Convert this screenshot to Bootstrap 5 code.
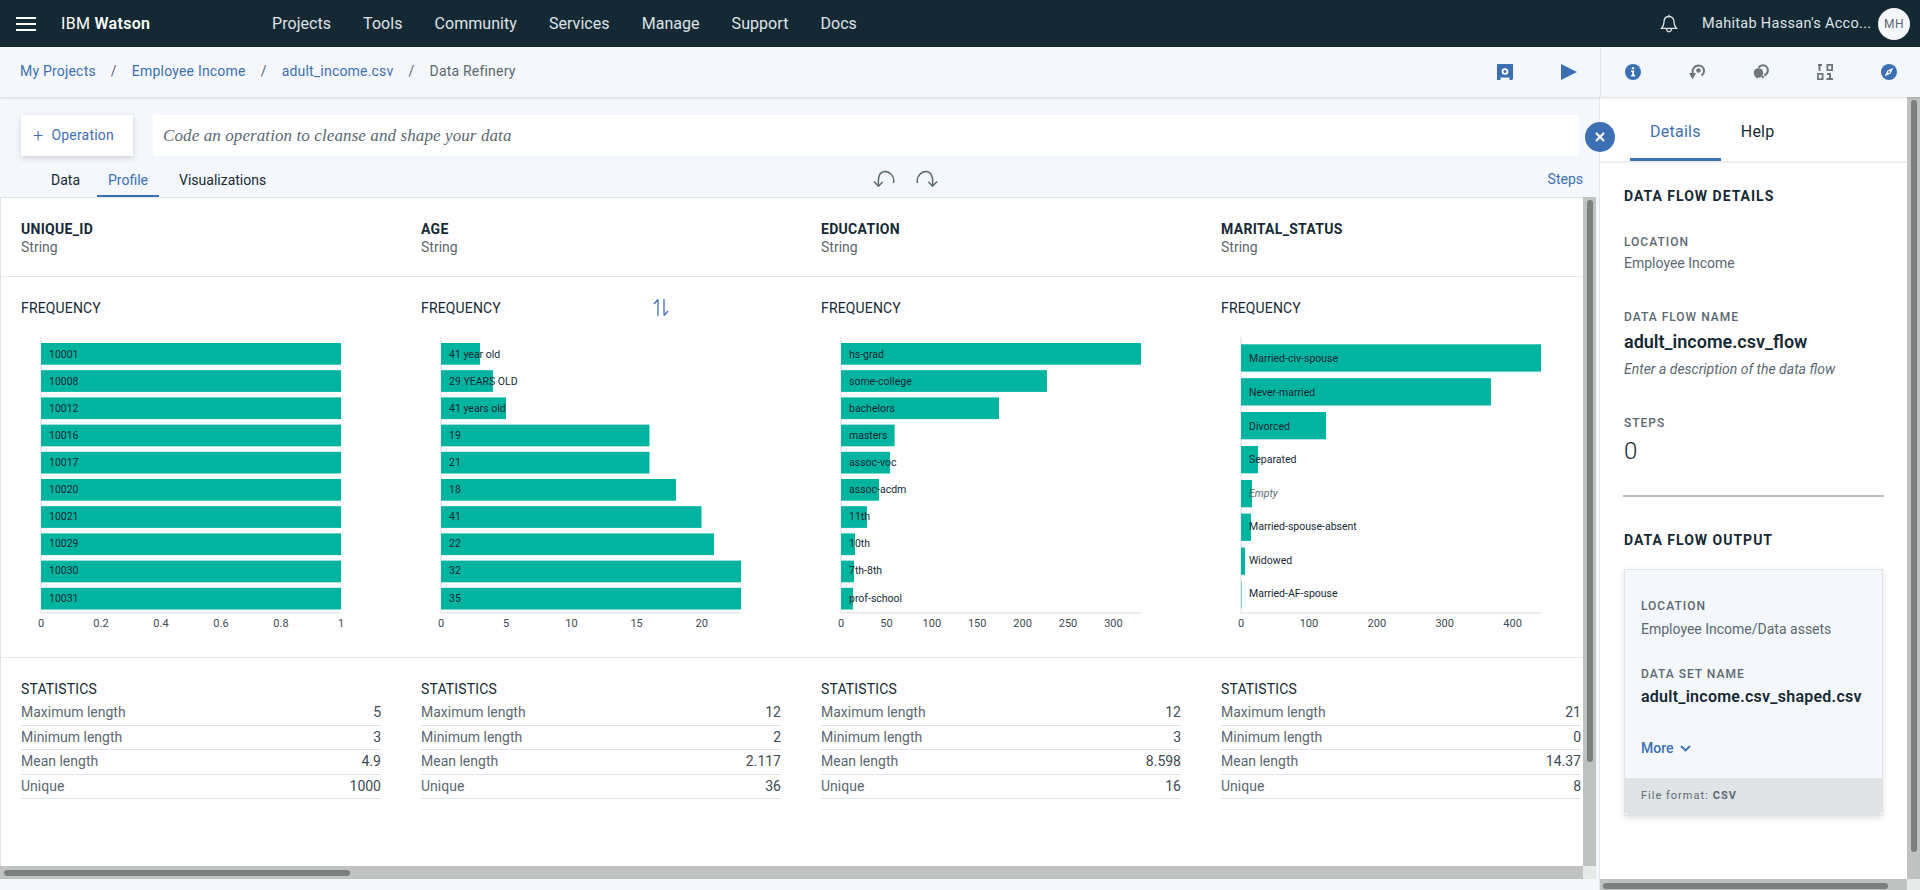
<!DOCTYPE html>
<html lang="en">
<head>
<meta charset="utf-8">
<title>Data Refinery</title>
<link href="https://cdn.jsdelivr.net/npm/bootstrap@5.3.0/dist/css/bootstrap.min.css" rel="stylesheet">
<style>
html,body{height:890px;overflow:hidden}
body{font-family:Roboto,"Liberation Sans",sans-serif;font-size:14px;color:#152935;background:#f4f7fb}
.app-frame{width:1920px;height:890px}
.top-bar{height:47px;background:#152935;padding:0;flex-wrap:nowrap}
.burger{width:20px;height:14px;margin-left:16px;border-top:2px solid #fff;border-bottom:2px solid #fff;position:relative}
.burger::after{content:"";position:absolute;left:0;right:0;top:4px;height:2px;background:#fff}
.brand-name{margin-left:25px;width:211px;color:#fff;font-size:16px;letter-spacing:.3px}
.brand-name b{font-weight:600}
.main-links{gap:32px}
.main-links a{color:#dfe3e6;font-size:16px;text-decoration:none;padding:0;letter-spacing:.05px}
.acct-name{color:#dfe3e6;font-size:14.5px;letter-spacing:.3px;margin:0 21px 0 24px;width:155px;white-space:nowrap}
.avatar-dot{width:32px;height:32px;border-radius:50%;background:#f4f7fb;color:#5a6872;font-size:12px;letter-spacing:.5px;margin-right:10px}
.sub-head{height:50px;background:#f4f7fb;box-shadow:0 1px 2px rgba(0,0,0,.14);position:relative;z-index:2}
.crumbs{width:1600px;height:50px;padding-left:20px}
.crumbs .breadcrumb{--bs-breadcrumb-margin-bottom:0;--bs-breadcrumb-divider-color:#5a6872;--bs-breadcrumb-item-active-color:#5a6872;--bs-breadcrumb-item-padding-x:15px;font-size:14px;letter-spacing:.2px;margin-top:-1px}
.crumbs a{color:#3d70b2;text-decoration:none}
.tool-icons{padding-right:23px;gap:48px}
.side-icons{width:320px;height:50px;border-left:1px solid #dfe3e6;padding-left:24px;gap:48px}
.work-area{width:1600px;height:793px}
.op-row{margin-top:18px;height:41px}
.op-btn{width:112px;height:41px;margin-left:21px;background:#fff;color:#3d70b2;font-size:14px;letter-spacing:.2px;box-shadow:0 2px 6px rgba(0,0,0,.16);border:0;border-radius:0;padding:0 0 0 12px;gap:8px;text-align:left}
.op-btn span{font-size:18px;line-height:1;font-weight:300}
.op-input{width:1426px;margin-left:20px;height:41px;background:#fff;font-family:"Liberation Serif",serif;font-style:italic;font-size:17px;letter-spacing:.1px;color:#5a6872;padding-left:10px}
.tab-row{height:41px;padding-right:17px}
.prof-tabs{margin-left:33px;width:840px}
.prof-tabs a{color:#152935;text-decoration:none;padding:0 18px;height:41px;line-height:48px;font-size:14px;border-bottom:2px solid transparent}
.prof-tabs a.on{color:#3d70b2;border-bottom-color:#3d70b2;padding:0;width:62px;text-align:center;margin:0 2px 0 -1px}
.hist-icons{gap:21px}
.steps-link{margin-left:auto;color:#3d70b2;text-decoration:none;padding-top:6px}
.sheet-wrap{width:1596px;height:682px;display:grid;grid-template-columns:1583px 13px;grid-template-rows:669px 13px}
.sheet{background:#fff;border-left:1px solid #dfe3e6;border-top:1px solid #dfe3e6;overflow:hidden}
.sec-grid{display:grid;grid-template-columns:repeat(4,400px);padding-left:20px}
.sec-head{height:79px;border-bottom:1px solid #e4e7ea;padding-top:22px}
.sec-freq{height:381px;border-bottom:1px solid #e4e7ea;padding-top:21px}
.col-name{font-weight:700;font-size:14px;line-height:18px;letter-spacing:.3px}
.col-type{color:#5a6872;line-height:18px}
.sub-title{line-height:20px;color:#152935;position:relative;letter-spacing:.15px}
.swap-ico{position:absolute;left:232px;top:0}
.freq-svg{display:block;margin-top:12px}
.freq-svg text{font-family:Roboto,"Liberation Sans",sans-serif;font-size:10.500px;fill:#152935}
.freq-svg .tick{fill:#3d4a52;text-anchor:middle;font-size:11px}
.freq-svg rect{fill:#00b4a0}
.freq-svg .ax{stroke:#e6e8ea;stroke-width:1.5;fill:none}
.sec-stats{padding-top:21px}
.stat-list{width:360px;margin-top:2px}
.stat-row{height:24.5px;border-bottom:1px solid #dfe3e6;line-height:22px;display:flex;justify-content:space-between;color:#5a6872}
.stat-row span:last-child{color:#3d4a52}
.bar-track{background:#c0c2c1;position:relative}
.thumb-v{position:absolute;left:4px;width:6px;background:#7b7f7f;border-radius:3px}
.thumb-h{position:absolute;top:4px;height:6px;background:#7b7f7f;border-radius:3px}
.bar-corner{background:#e8e9e9}
.side-panel{width:320px;height:793px;background:#fff;position:relative;display:grid;grid-template-columns:307px 13px;grid-template-rows:782px 11px;box-shadow:-1px 0 0 #e4e7ea}
.panel-body{overflow:hidden}
.close-dot{position:absolute;left:-15px;top:25px;width:30px;height:30px;border-radius:50%;background:#3d70b2;z-index:3}
.panel-tabs{height:64px;box-shadow:0 1px 3px rgba(0,0,0,.14);padding-left:30px}
.panel-tabs a{font-size:16px;text-decoration:none;color:#152935;height:64px;line-height:69px;padding:0 20px;letter-spacing:.25px}
.panel-tabs a.on{color:#3d70b2;border-bottom:3px solid #3d70b2}
.panel-main{padding-left:24px}
.caps-title{font-weight:700;font-size:14px;line-height:20px;letter-spacing:1px}
.caps-label{font-weight:500;font-size:12px;line-height:16px;letter-spacing:1px;color:#5a6872}
.plain-val{line-height:20px;color:#5a6872}
.flow-name{font-weight:600;font-size:18px;line-height:24px}
.flow-desc{font-style:italic;line-height:20px;color:#5a6872}
.step-num{font-size:24px;font-weight:300;line-height:32px}
.panel-rule{height:2px;width:261px;background:#bcbfc0;margin:28px 0 0 -1px;opacity:1;border:0}
.output-card{width:259px;height:247px;margin-top:19px;background:#f4f7fb;border:1px solid #dfe3e6;border-radius:0;box-shadow:0 2px 6px rgba(0,0,0,.12)}
.out-inner{padding:28px 0 0 16px;height:209px}
.set-name{font-weight:600;font-size:16px;line-height:22px;white-space:nowrap;letter-spacing:.25px}
.more-link{color:#3d70b2;font-weight:500;text-decoration:none;line-height:20px;gap:6px}
.out-foot{height:37px;background:#dfe3e6;border:0;border-radius:0;padding:0 0 0 16px;font-size:11px;letter-spacing:1px;color:#5a6872;display:flex;align-items:center;gap:4px}
.out-foot b{font-weight:700}
</style>
</head>
<body>
<div class="app-frame d-flex flex-column">
  <nav class="navbar top-bar d-flex align-items-center">
    <div class="burger"></div>
    <div class="brand-name">IBM <b>Watson</b></div>
    <div class="nav main-links">
      <a class="nav-link" href="#">Projects</a><a class="nav-link" href="#">Tools</a><a class="nav-link" href="#">Community</a><a class="nav-link" href="#">Services</a><a class="nav-link" href="#">Manage</a><a class="nav-link" href="#">Support</a><a class="nav-link" href="#">Docs</a>
    </div>
    <div class="ms-auto d-flex align-items-center">
      <svg width="18" height="20" viewBox="0 0 18 20" fill="none" stroke="#dfe3e6" stroke-width="1.3"><path d="M9 2.5c-3.2 0-5 2.3-5 5.5 0 3.5-1.2 5-2.6 6.4h15.2C15.2 13 14 11.500 14 8c0-3.200-1.800-5.500-5-5.500zM9 .8v1.700M6.500 14.800c.2 2 1.300 3 2.500 3s2.300-1 2.500-3"/></svg>
      <div class="acct-name">Mahitab Hassan's Acco...</div>
      <div class="avatar-dot d-flex align-items-center justify-content-center">MH</div>
    </div>
  </nav>
  <header class="sub-head d-flex">
    <div class="crumbs d-flex align-items-center justify-content-between">
      <ol class="breadcrumb">
        <li class="breadcrumb-item"><a href="#">My Projects</a></li>
        <li class="breadcrumb-item"><a href="#">Employee Income</a></li>
        <li class="breadcrumb-item"><a href="#">adult_income.csv</a></li>
        <li class="breadcrumb-item active">Data Refinery</li>
      </ol>
      <div class="tool-icons d-flex align-items-center">
        <svg width="16" height="16" viewBox="0 0 16 16"><path fill="#3d70b2" d="M0 0h16v14.500l-1 1.500H12.500v-2.500h-9V16H0z"/><circle cx="8" cy="7.500" r="3.300" fill="#fff"/><circle cx="8" cy="7.500" r="1.500" fill="#3d70b2"/></svg>
        <svg width="16" height="16" viewBox="0 0 16 16"><path fill="#3d70b2" d="M0 0l16 8-16 8z"/></svg>
      </div>
    </div>
    <div class="side-icons d-flex align-items-center">
      <svg width="16" height="16" viewBox="0 0 16 16"><circle cx="8" cy="8" r="8" fill="#3d70b2"/><path fill="#fff" d="M6.800 3.200h2.300v2h-2.300zM6.200 6.500h2.900v4.600h1v1.500H6.200v-1.500h1V8H6.200z"/></svg>
      <svg width="16" height="16" viewBox="0 0 16 16"><path fill="none" stroke="#6d7777" stroke-width="2" d="M3.500 9C3 4.500 6 1.500 9.500 1.500s5.500 2.800 5.500 5.500-1 3.500-2.500 4.500"/><circle cx="9.500" cy="6.500" r="2.300" fill="#6d7777"/><path fill="#6d7777" d="M0 9h7l-3.500 6.500z"/></svg>
      <svg width="16" height="16" viewBox="0 0 16 16"><path fill="none" stroke="#6d7777" stroke-width="2" d="M5.500 3.500C7 1.800 9 1 10.500 1.300c3 .5 4.700 3 4.300 5.700-.3 2-1.500 3.500-3.500 4.300"/><circle cx="5.500" cy="9" r="4.800" fill="#6d7777"/><path fill="#6d7777" d="M2.500 12h3l-1.500 3zM8.500 12h3l-1.500 3z"/></svg>
      <svg width="16" height="16" viewBox="0 0 16 16" fill="#6d7777"><path d="M1 0h4v2H3.500v5h-2V2H1zM9.500 0H16v7H9.500zM11.300 1.800v3.400h2.900V1.800zM0 9h6.500v7H0zM1.800 10.800v3.400h2.900v-3.400zM10 9h4v5h2v2H9.500v-2H12v-3h-2z"/></svg>
      <svg width="16" height="16" viewBox="0 0 16 16"><circle cx="8" cy="8" r="8" fill="#3d70b2"/><path fill="#fff" d="M12.300 3.700L9.500 9.500 3.700 12.300 6.500 6.500zM8 7a1 1 0 1 0 0 2 1 1 0 0 0 0-2z"/></svg>
    </div>
  </header>
  <div class="d-flex">
    <main class="work-area">
      <div class="op-row d-flex">
        <button class="btn op-btn d-flex align-items-center" type="button"><span>+</span>Operation</button>
        <div class="op-input d-flex align-items-center">Code an operation to cleanse and shape your data</div>
      </div>
      <div class="tab-row d-flex">
        <div class="nav prof-tabs">
          <a class="nav-link" href="#">Data</a><a class="nav-link on" href="#">Profile</a><a class="nav-link" href="#">Visualizations</a>
        </div>
        <div class="hist-icons d-flex align-items-center pt-1">
          <svg width="22" height="18" viewBox="0 0 22 18" fill="none" stroke="#5a6872" stroke-width="1.500"><path d="M20.500 13C22 6 16.500 1.500 12 1.500S4.500 5 5.500 16"/><path d="M.8 11.500l4.700 4.700 4-4.200"/></svg>
          <svg width="22" height="18" viewBox="0 0 22 18" fill="none" stroke="#5a6872" stroke-width="1.500"><path d="M1.500 13C0 6 5.500 1.500 10 1.500s7.500 3.500 6.500 14.500"/><path d="M21.200 11.500l-4.700 4.700-4-4.200"/></svg>
        </div>
        <a class="steps-link d-flex align-items-center" href="#">Steps</a>
      </div>
      <div class="sheet-wrap">
        <div class="sheet">
          <div class="sec-grid sec-head">
            <div><div class="col-name">UNIQUE_ID</div><div class="col-type">String</div></div>
            <div><div class="col-name">AGE</div><div class="col-type">String</div></div>
            <div><div class="col-name">EDUCATION</div><div class="col-type">String</div></div>
            <div><div class="col-name">MARITAL_STATUS</div><div class="col-type">String</div></div>
          </div>
          <div class="sec-grid sec-freq">
            <div>
              <div class="sub-title">FREQUENCY</div>
              <svg class="freq-svg" width="360" height="310">
                <path class="ax" d="M20 7V283H320"/>
                <rect x="20" y="13" width="300" height="21.700"/><rect x="20" y="40.200" width="300" height="21.700"/><rect x="20" y="67.400" width="300" height="21.700"/><rect x="20" y="94.600" width="300" height="21.700"/><rect x="20" y="121.800" width="300" height="21.700"/><rect x="20" y="149" width="300" height="21.700"/><rect x="20" y="176.200" width="300" height="21.700"/><rect x="20" y="203.400" width="300" height="21.700"/><rect x="20" y="230.600" width="300" height="21.700"/><rect x="20" y="257.800" width="300" height="21.700"/>
                <text x="28" y="27.500">10001</text><text x="28" y="54.500">10008</text><text x="28" y="81.500">10012</text><text x="28" y="109">10016</text><text x="28" y="136">10017</text><text x="28" y="163">10020</text><text x="28" y="190">10021</text><text x="28" y="217">10029</text><text x="28" y="244">10030</text><text x="28" y="271.500">10031</text>
                <text class="tick" x="20" y="297">0</text><text class="tick" x="80" y="297">0.2</text><text class="tick" x="140" y="297">0.4</text><text class="tick" x="200" y="297">0.6</text><text class="tick" x="260" y="297">0.8</text><text class="tick" x="320" y="297">1</text>
              </svg>
            </div>
            <div>
              <div class="sub-title">FREQUENCY
                <svg class="swap-ico" width="16" height="19" viewBox="0 0 16 19" fill="none" stroke="#3d70b2" stroke-width="1.300"><path d="M5 18V1.500M5 1.500L1 6M11 1v16.500M11 17.500l4-4.500"/></svg>
              </div>
              <svg class="freq-svg" width="360" height="310">
                <path class="ax" d="M20 7V283H320"/>
                <rect x="20" y="13" width="39" height="21.700"/><rect x="20" y="40.200" width="52" height="21.700"/><rect x="20" y="67.400" width="65" height="21.700"/><rect x="20" y="94.600" width="208.500" height="21.700"/><rect x="20" y="121.800" width="208.500" height="21.700"/><rect x="20" y="149" width="235" height="21.700"/><rect x="20" y="176.200" width="260.500" height="21.700"/><rect x="20" y="203.400" width="273" height="21.700"/><rect x="20" y="230.600" width="300" height="21.700"/><rect x="20" y="257.800" width="300" height="21.700"/>
                <text x="28" y="27.500">41 year old</text><text x="28" y="54.500">29 YEARS OLD</text><text x="28" y="81.500">41 years old</text><text x="28" y="109">19</text><text x="28" y="136">21</text><text x="28" y="163">18</text><text x="28" y="190">41</text><text x="28" y="217">22</text><text x="28" y="244">32</text><text x="28" y="271.500">35</text>
                <text class="tick" x="20" y="297">0</text><text class="tick" x="85.200" y="297">5</text><text class="tick" x="150.400" y="297">10</text><text class="tick" x="215.600" y="297">15</text><text class="tick" x="280.800" y="297">20</text>
              </svg>
            </div>
            <div>
              <div class="sub-title">FREQUENCY</div>
              <svg class="freq-svg" width="360" height="310">
                <path class="ax" d="M20 7V283H320"/>
                <rect x="20" y="13" width="300" height="21.700"/><rect x="20" y="40.200" width="206" height="21.700"/><rect x="20" y="67.400" width="158" height="21.700"/><rect x="20" y="94.600" width="53.600" height="21.700"/><rect x="20" y="121.800" width="49" height="21.700"/><rect x="20" y="149" width="38" height="21.700"/><rect x="20" y="176.200" width="26" height="21.700"/><rect x="20" y="203.400" width="14" height="21.700"/><rect x="20" y="230.600" width="13" height="21.700"/><rect x="20" y="257.800" width="12" height="21.700"/>
                <text x="28" y="27.500">hs-grad</text><text x="28" y="54.500">some-college</text><text x="28" y="81.500">bachelors</text><text x="28" y="109">masters</text><text x="28" y="136">assoc-voc</text><text x="28" y="163">assoc-acdm</text><text x="28" y="190">11th</text><text x="28" y="217">10th</text><text x="28" y="244">7th-8th</text><text x="28" y="271.500">prof-school</text>
                <text class="tick" x="20" y="297">0</text><text class="tick" x="65.400" y="297">50</text><text class="tick" x="110.800" y="297">100</text><text class="tick" x="156.200" y="297">150</text><text class="tick" x="201.600" y="297">200</text><text class="tick" x="247" y="297">250</text><text class="tick" x="292.400" y="297">300</text>
              </svg>
            </div>
            <div>
              <div class="sub-title">FREQUENCY</div>
              <svg class="freq-svg" width="360" height="310">
                <path class="ax" d="M20 7V283H320"/>
                <rect x="20" y="14.300" width="300" height="27.300"/><rect x="20" y="48.200" width="250" height="27.300"/><rect x="20" y="82" width="85" height="27.300"/><rect x="20" y="116" width="17" height="27.300"/><rect x="20" y="150" width="11" height="27.300"/><rect x="20" y="183.600" width="10" height="27.300"/><rect x="20" y="217.500" width="4" height="27.300"/><rect x="20" y="251" width="1" height="27.300" opacity=".45"/>
                <text x="28" y="31.500">Married-civ-spouse</text><text x="28" y="65.500">Never-married</text><text x="28" y="99.500">Divorced</text><text x="28" y="132.500">Separated</text><text x="28" y="166.500" font-style="italic" style="fill:#5a6872">Empty</text><text x="28" y="200">Married-spouse-absent</text><text x="28" y="234">Widowed</text><text x="28" y="267">Married-AF-spouse</text>
                <text class="tick" x="20" y="297">0</text><text class="tick" x="87.900" y="297">100</text><text class="tick" x="155.800" y="297">200</text><text class="tick" x="223.700" y="297">300</text><text class="tick" x="291.600" y="297">400</text>
              </svg>
            </div>
          </div>
          <div class="sec-grid sec-stats">
            <div><div class="sub-title">STATISTICS</div><div class="stat-list">
              <div class="stat-row"><span>Maximum length</span><span>5</span></div><div class="stat-row"><span>Minimum length</span><span>3</span></div><div class="stat-row"><span>Mean length</span><span>4.9</span></div><div class="stat-row"><span>Unique</span><span>1000</span></div></div></div>
            <div><div class="sub-title">STATISTICS</div><div class="stat-list">
              <div class="stat-row"><span>Maximum length</span><span>12</span></div><div class="stat-row"><span>Minimum length</span><span>2</span></div><div class="stat-row"><span>Mean length</span><span>2.117</span></div><div class="stat-row"><span>Unique</span><span>36</span></div></div></div>
            <div><div class="sub-title">STATISTICS</div><div class="stat-list">
              <div class="stat-row"><span>Maximum length</span><span>12</span></div><div class="stat-row"><span>Minimum length</span><span>3</span></div><div class="stat-row"><span>Mean length</span><span>8.598</span></div><div class="stat-row"><span>Unique</span><span>16</span></div></div></div>
            <div><div class="sub-title">STATISTICS</div><div class="stat-list">
              <div class="stat-row"><span>Maximum length</span><span>21</span></div><div class="stat-row"><span>Minimum length</span><span>0</span></div><div class="stat-row"><span>Mean length</span><span>14.37</span></div><div class="stat-row"><span>Unique</span><span>8</span></div></div></div>
          </div>
        </div>
        <div class="bar-track"><div class="thumb-v" style="top:3px;height:562px"></div></div>
        <div class="bar-track"><div class="thumb-h" style="left:4px;width:346px"></div></div>
        <div class="bar-corner"></div>
      </div>
    </main>
    <aside class="side-panel">
      <div class="close-dot d-flex align-items-center justify-content-center">
        <svg width="10" height="10" viewBox="0 0 10 10" stroke="#fff" stroke-width="2"><path d="M1 1l8 8M9 1L1 9"/></svg>
      </div>
      <div class="panel-body">
        <div class="panel-tabs nav">
          <a class="nav-link on" href="#">Details</a><a class="nav-link" href="#">Help</a>
        </div>
        <div class="panel-main">
          <div class="caps-title" style="margin-top:25px">DATA FLOW DETAILS</div>
          <div class="caps-label" style="margin-top:28px">LOCATION</div>
          <div class="plain-val" style="margin-top:3px">Employee Income</div>
          <div class="caps-label" style="margin-top:36px">DATA FLOW NAME</div>
          <div class="flow-name" style="margin-top:5px">adult_income.csv_flow</div>
          <div class="flow-desc" style="margin-top:5px">Enter a description of the data flow</div>
          <div class="caps-label" style="margin-top:36px">STEPS</div>
          <div class="step-num" style="margin-top:4px">0</div>
          <hr class="panel-rule">
          <div class="caps-title" style="margin-top:33px">DATA FLOW OUTPUT</div>
          <div class="card output-card">
            <div class="out-inner">
              <div class="caps-label">LOCATION</div>
              <div class="plain-val" style="margin-top:5px">Employee Income/Data assets</div>
              <div class="caps-label" style="margin-top:27px">DATA SET NAME</div>
              <div class="set-name" style="margin-top:4px">adult_income.csv_shaped.csv</div>
              <a class="more-link d-flex align-items-center" style="margin-top:30px" href="#">More
                <svg width="11" height="7" viewBox="0 0 11 7" fill="none" stroke="#3d70b2" stroke-width="1.800"><path d="M1 1l4.500 4.500L10 1"/></svg>
              </a>
            </div>
            <div class="card-footer out-foot">File format: <b>CSV</b></div>
          </div>
        </div>
      </div>
      <div class="bar-track"><div class="thumb-v" style="top:3px;height:752px"></div></div>
      <div class="bar-track"><div class="thumb-h" style="top:4px;left:3px;width:285px"></div></div>
      <div class="bar-corner"></div>
    </aside>
  </div>
</div>
<script src="https://cdn.jsdelivr.net/npm/bootstrap@5.3.0/dist/js/bootstrap.bundle.min.js"></script>
</body>
</html>
